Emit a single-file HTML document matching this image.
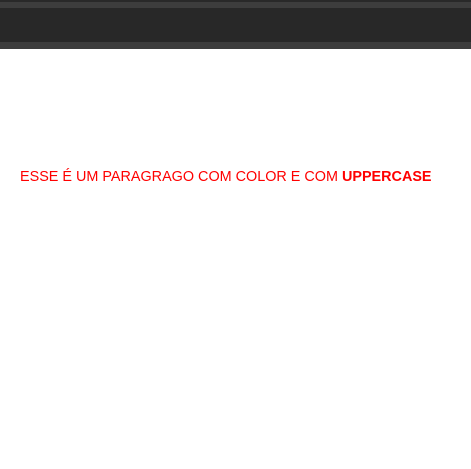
<!DOCTYPE html>
<html><head><meta charset="utf-8"><style>
html,body{margin:0;padding:0;width:471px;height:469px;background:#fff;overflow:hidden}
.bar{position:absolute;left:0;width:471px}
p{position:absolute;left:20px;top:169px;margin:0;font-family:"Liberation Sans",sans-serif;font-size:14.4px;color:#f00;white-space:nowrap}
b{font-weight:bold}
</style></head><body>
<div class="bar" style="top:0;height:2px;background:#292929"></div>
<div class="bar" style="top:2px;height:6px;background:#3d3d3d"></div>
<div class="bar" style="top:8px;height:34px;background:#282828"></div>
<div class="bar" style="top:42px;height:7px;background:#3d3d3d"></div>
<p>ESSE É UM PARAGRAGO COM COLOR E COM <b>UPPERCASE</b></p>
</body></html>
